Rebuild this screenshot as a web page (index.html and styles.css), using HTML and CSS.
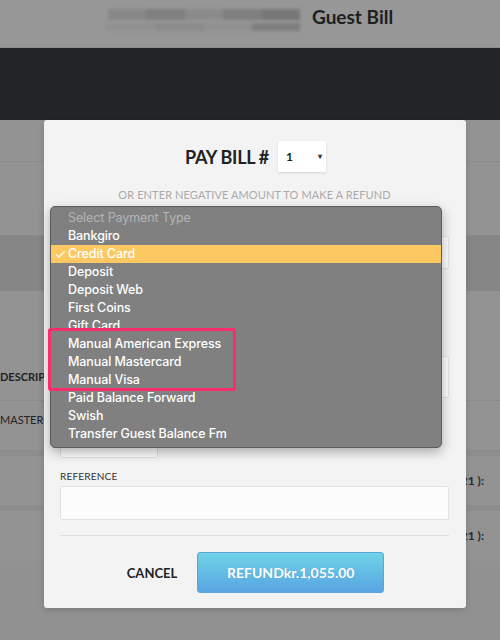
FILE: index.html
```html
<!DOCTYPE html>
<html>
<head>
    <title>Guest Bill</title>
    <link rel="stylesheet" href="styles.css">
</head>
<body>
    <div class="header">
        <div class="blurred">
            <div class="blur-line">
                <span class="px p1"></span><span class="px p2"></span><span class="px p3"></span><span class="px p2"></span><span class="px p4"></span>
            </div>
            <div class="blur-line short">
                <span class="px p5"></span><span class="px p3"></span><span class="px p5"></span><span class="px p2"></span>
            </div>
        </div>
        <h1>Guest Bill</h1>
    </div>
    <div class="topbar"></div>

    <div class="rows">
        <div class="row r1"></div>
        <div class="row r2"></div>
        <div class="row r3"></div>
        <div class="row r4"><div class="cell-bold"><span>DESCRIPTION</span></div></div>
        <div class="row r5"><div class="cell"><span>MASTERCARD</span></div></div>
        <div class="row strip"></div>
        <div class="row r6"><div class="cell right"><span>(2021 ):</span></div></div>
        <div class="row strip"></div>
        <div class="row r7"><div class="cell right"><span>(2021 ):</span></div></div>
        <div class="row r8"></div>
    </div>

    <div class="modal">
        <div class="modal-title">
            <h2>PAY BILL #</h2>
            <div class="bill-select">1 <span class="caret">&#9662;</span></div>
        </div>
        <div class="hint">OR ENTER NEGATIVE AMOUNT TO MAKE A REFUND</div>

        <div class="field f1"><div class="input"></div></div>
        <div class="field f2"><div class="input tall"></div></div>
        <div class="field f3"><div class="input small"></div></div>

        <label class="label">REFERENCE</label>
        <div class="input ref"></div>

        <div class="divider"></div>

        <div class="actions">
            <button class="cancel">CANCEL</button>
            <button class="refund">REFUNDkr.1,055.00</button>
        </div>

        <ul class="popup">
            <li class="placeholder">Select Payment Type</li>
            <li>Bankgiro</li>
            <li class="selected"><span class="check">&#10003;</span>Credit Card</li>
            <li>Deposit</li>
            <li>Deposit Web</li>
            <li>First Coins</li>
            <li>Gift Card</li>
            <li>Manual American Express</li>
            <li>Manual Mastercard</li>
            <li>Manual Visa</li>
            <li>Paid Balance Forward</li>
            <li>Swish</li>
            <li>Transfer Guest Balance Fm</li>
        </ul>

        <div class="highlight-box"></div>
    </div>
</body>
</html>
```

FILE: styles.css
```css
body {
    margin: 0;
    font-family: Lato, "Open Sans", sans-serif;
    background-color: #939393;
    width: 500px;
    height: 640px;
    overflow: hidden;
    position: relative;
}
.header {
    height: 47px;
    background-color: #979797;
    display: flex;
    align-items: flex-start;
    padding-left: 108px;
    border-bottom: 1px solid #8c8c8c;
}
.header h1 {
    margin: 5px 0 0 12px;
    font-size: 19px;
    font-weight: 700;
    color: #1e1e1e;
}
.blurred {
    width: 192px;
    padding-top: 9px;
    filter: blur(1.5px);
}
.blur-line {
    display: flex;
    height: 11px;
    margin-bottom: 3px;
}
.blur-line.short {
    height: 8px;
    margin-left: -2px;
}
.px {
    flex: 1;
    height: 100%;
}
.p1 { background-color: #888; }
.p2 { background-color: #7f7f7f; }
.p3 { background-color: #8b8b8b; }
.p4 { background-color: #777; }
.p5 { background-color: #909090; }
.topbar {
    height: 72px;
    background-color: #232428;
}
.rows {
    display: flex;
    flex-direction: column;
}
.row {
    position: relative;
    border-bottom: 1px solid #8b8b8b;
}
.r1 { height: 41px; }
.r2 { height: 73px; }
.r3 { height: 55px; background-color: #868686; border-bottom: none; }
.r4 { height: 109px; }
.r5 { height: 49px; border-bottom: none; }
.strip { height: 6px; background-color: #8d8d8d; border-bottom: none; }
.r6 { height: 49px; border-bottom: none; }
.r7 { height: 50px; border-bottom: none; }
.r8 { height: 80px; background-color: #919191; border-bottom: none; }

/* cells are cut off by the modal, so clip them at its edge */
.cell-bold,
.cell {
    position: absolute;
    left: 0;
    width: 44px;
    overflow: hidden;
    white-space: nowrap;
    display: flex;
    color: #222;
    font-size: 11px;
}
.cell-bold {
    bottom: 17px;
    font-weight: 700;
}
.cell {
    top: 12px;
}
.cell.right {
    left: 466px;
    width: 34px;
    justify-content: flex-end;
    padding-right: 16px;
    box-sizing: border-box;
    width: 34px;
    top: 17px;
    font-size: 12px;
    font-weight: 700;
    color: #2a2a2a;
}
.cell.right span {
    flex-shrink: 0;
}

.modal {
    position: absolute;
    left: 44px;
    top: 120px;
    width: 389px;
    height: 488px;
    padding: 0 17px 0 16px;
    background-color: #f3f3f3;
    border-radius: 3px;
    box-shadow: 0 2px 6px rgba(0, 0, 0, 0.15);
}
.modal-title {
    display: flex;
    justify-content: center;
    align-items: center;
    gap: 9px;
    margin-top: 21px;
    height: 31px;
    padding-left: 2px;
}
.modal-title h2 {
    margin: 0;
    font-size: 18px;
    font-weight: 700;
    color: #222;
    letter-spacing: -0.3px;
}
.bill-select {
    width: 36px;
    height: 31px;
    line-height: 31px;
    padding-left: 8px;
    padding-right: 4px;
    background-color: #fff;
    box-shadow: 0 1px 2px rgba(0, 0, 0, 0.12);
    font-size: 12px;
    font-weight: 700;
    color: #222;
    display: flex;
    justify-content: space-between;
}
.caret {
    font-size: 8px;
    color: #333;
}
.hint {
    margin-top: 16px;
    text-align: center;
    font-size: 11px;
    color: #aaa;
    letter-spacing: 0.1px;
}
.input {
    background-color: #fcfcfc;
    border: 1px solid #e2e2e2;
    border-radius: 2px;
    height: 31px;
}
.f1 { margin-top: 35px; }
.f2 { margin-top: 87px; }
.f2 .input { height: 40px; }
.f3 { margin-top: 25px; }
.f3 .input { width: 96px; height: 33px; }
.label {
    display: block;
    margin-top: 12px;
    font-size: 10px;
    color: #333;
    letter-spacing: 0.2px;
}
.input.ref {
    margin-top: 4px;
    height: 32px;
}
.divider {
    margin-top: 15px;
    border-top: 1px solid #ddd;
}
.actions {
    display: flex;
    justify-content: center;
    align-items: center;
    gap: 20px;
    margin-top: 16px;
    padding-left: 2px;
}
.cancel {
    background: none;
    border: none;
    padding: 0;
    font-family: inherit;
    font-size: 13px;
    font-weight: 700;
    color: #222;
}
.refund {
    width: 187px;
    height: 41px;
    border: 1px solid #5aa6dc;
    border-radius: 3px;
    background: linear-gradient(#6fd2e6, #58a5e2);
    color: #fff;
    font-family: inherit;
    font-size: 14px;
    font-weight: 700;
    text-shadow: 0 0 1px rgba(0, 0, 0, 0.15);
}

.popup {
    position: absolute;
    left: 6px;
    top: 86px;
    width: 390px;
    margin: 0;
    padding: 2px 0 4px;
    list-style: none;
    background-color: #808080;
    border: 1px solid #5c5c5c;
    border-radius: 5px;
    box-shadow: 0 4px 12px rgba(0, 0, 0, 0.3);
    font-family: Inter, "Liberation Sans", sans-serif;
    font-size: 12.5px;
    font-weight: 500;
    letter-spacing: -0.1px;
    color: #fff;
}
.popup li {
    position: relative;
    height: 18px;
    line-height: 18px;
    padding-left: 17px;
}
.popup .placeholder {
    color: #b4b4b4;
    font-weight: 400;
}
.popup .selected {
    background-color: #fcc862;
}
.check {
    position: absolute;
    left: 3px;
    font-size: 14px;
    font-weight: 400;
}
.highlight-box {
    position: absolute;
    left: 4px;
    top: 208px;
    width: 182px;
    height: 57px;
    border: 3px solid #f72d6c;
    border-radius: 3px;
}
```
